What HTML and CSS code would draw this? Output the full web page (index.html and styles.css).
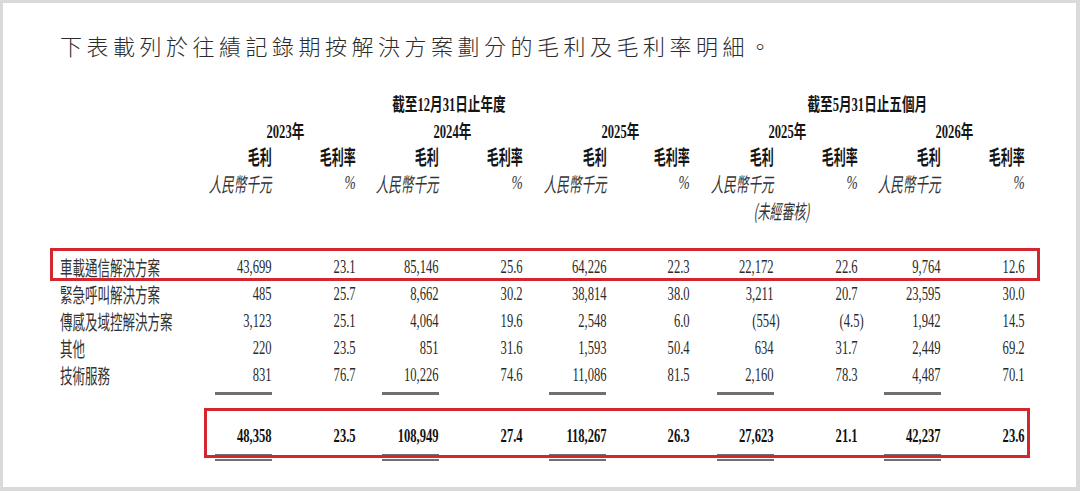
FILE: index.html
```html
<!DOCTYPE html>
<html lang="zh-Hant">
<head>
<meta charset="utf-8">
<title>毛利及毛利率明細</title>
<link rel="stylesheet" href="styles.css">
</head>
<body>
<div class="frame">
  <p class="title">下表載列於往績記錄期按解決方案劃分的毛利及毛利率明細。</p>

  <div class="grid head">
    <div class="c"></div>
    <div class="c grp g1">截至12月31日止年度</div>
    <div class="c grp g2">截至5月31日止五個月</div>

    <div class="c"></div>
    <div class="c yr">2023年</div>
    <div class="c yr">2024年</div>
    <div class="c yr">2025年</div>
    <div class="c yr">2025年</div>
    <div class="c yr">2026年</div>

    <div class="c"></div>
    <div class="c hd">毛利</div><div class="c hd">毛利率</div>
    <div class="c hd">毛利</div><div class="c hd">毛利率</div>
    <div class="c hd">毛利</div><div class="c hd">毛利率</div>
    <div class="c hd">毛利</div><div class="c hd">毛利率</div>
    <div class="c hd">毛利</div><div class="c hd">毛利率</div>

    <div class="c"></div>
    <div class="c unit">人民幣千元</div><div class="c pct">%</div>
    <div class="c unit">人民幣千元</div><div class="c pct">%</div>
    <div class="c unit">人民幣千元</div><div class="c pct">%</div>
    <div class="c unit">人民幣千元</div><div class="c pct">%</div>
    <div class="c unit">人民幣千元</div><div class="c pct">%</div>

    <div class="c unit unaud">(未經審核)</div>
  </div>

  <div class="grid body">
    <div class="c lbl">車載通信解決方案</div>
    <div class="c n">43,699</div><div class="c n">23.1</div>
    <div class="c n">85,146</div><div class="c n">25.6</div>
    <div class="c n">64,226</div><div class="c n">22.3</div>
    <div class="c n">22,172</div><div class="c n">22.6</div>
    <div class="c n">9,764</div><div class="c n">12.6</div>

    <div class="c lbl">緊急呼叫解決方案</div>
    <div class="c n">485</div><div class="c n">25.7</div>
    <div class="c n">8,662</div><div class="c n">30.2</div>
    <div class="c n">38,814</div><div class="c n">38.0</div>
    <div class="c n">3,211</div><div class="c n">20.7</div>
    <div class="c n">23,595</div><div class="c n">30.0</div>

    <div class="c lbl">傳感及域控解決方案</div>
    <div class="c n">3,123</div><div class="c n">25.1</div>
    <div class="c n">4,064</div><div class="c n">19.6</div>
    <div class="c n">2,548</div><div class="c n">6.0</div>
    <div class="c n neg">(554)</div><div class="c n neg">(4.5)</div>
    <div class="c n">1,942</div><div class="c n">14.5</div>

    <div class="c lbl">其他</div>
    <div class="c n">220</div><div class="c n">23.5</div>
    <div class="c n">851</div><div class="c n">31.6</div>
    <div class="c n">1,593</div><div class="c n">50.4</div>
    <div class="c n">634</div><div class="c n">31.7</div>
    <div class="c n">2,449</div><div class="c n">69.2</div>

    <div class="c lbl">技術服務</div>
    <div class="c n">831</div><div class="c n">76.7</div>
    <div class="c n">10,226</div><div class="c n">74.6</div>
    <div class="c n">11,086</div><div class="c n">81.5</div>
    <div class="c n">2,160</div><div class="c n">78.3</div>
    <div class="c n">4,487</div><div class="c n">70.1</div>

    <div class="sp"></div>
    <div class="rule"></div><div class="sp"></div>
    <div class="rule"></div><div class="sp"></div>
    <div class="rule"></div><div class="sp"></div>
    <div class="rule"></div><div class="sp"></div>
    <div class="rule"></div><div class="sp"></div>

    <div class="c tot"></div>
    <div class="c n tot">48,358</div><div class="c n tot">23.5</div>
    <div class="c n tot">108,949</div><div class="c n tot">27.4</div>
    <div class="c n tot">118,267</div><div class="c n tot">26.3</div>
    <div class="c n tot">27,623</div><div class="c n tot">21.1</div>
    <div class="c n tot">42,237</div><div class="c n tot">23.6</div>

    <div class="sp"></div>
    <div class="drule"></div><div class="sp"></div>
    <div class="drule"></div><div class="sp"></div>
    <div class="drule"></div><div class="sp"></div>
    <div class="drule"></div><div class="sp"></div>
    <div class="drule"></div><div class="sp"></div>
  </div>

  <div class="mark mark-row"></div>
  <div class="mark mark-total"></div>
</div>
</body>
</html>
```

FILE: styles.css
```css
html, body {
  margin: 0;
  padding: 0;
  background: #ffffff;
}

.frame {
  position: relative;
  width: 1080px;
  height: 491px;
  box-sizing: border-box;
  border-style: solid;
  border-color: #dadada;
  border-width: 3px 4px 4px 3px;
  padding-left: 57px;
  background: #ffffff;
  color: #2a2a2a;
  font-family: "Liberation Serif", "Noto Sans CJK TC", serif;
}

.title {
  margin: 0;
  padding-top: 27px;
  font-family: "Noto Sans CJK TC", sans-serif;
  font-size: 22px;
  font-weight: 300;
  line-height: 30px;
  letter-spacing: 4.5px;
  color: #2b2b2b;
  white-space: nowrap;
}

.grid {
  display: grid;
  grid-template-columns: 128px repeat(10, 83.67px);
}

.head {
  margin-top: 29px;
}

.body {
  margin-top: 30px;
}

.c {
  height: 27px;
  display: flex;
  align-items: center;
  justify-content: flex-end;
  white-space: nowrap;
  transform-origin: right center;
}

/* header */
.grp {
  justify-content: center;
  transform-origin: center center;
  transform: scaleX(0.7);
  margin-left: 20px;
  font-size: 18px;
  font-weight: 700;
  color: #151515;
}
.g1 { grid-column: span 6; }
.g2 { grid-column: span 4; }

.yr {
  grid-column: span 2;
  margin-right: 51px;
  transform: scaleX(0.7);
  font-size: 18px;
  font-weight: 700;
  color: #151515;
}

.hd {
  font-family: "Noto Sans CJK TC", sans-serif;
  font-size: 20px;
  font-weight: 700;
  color: #151515;
  transform: scaleX(0.6);
}

.unit {
  font-family: "Noto Sans CJK TC", sans-serif;
  font-size: 20px;
  font-style: italic;
  font-weight: 400;
  color: #333333;
  transform: scaleX(0.63);
}

.pct {
  font-size: 18px;
  font-style: italic;
  color: #333333;
  transform: scaleX(0.75);
}

.unaud {
  grid-column: 8;
  grid-row: 5;
  margin-right: -36px;
  transform: scaleX(0.6);
}

/* body */
.lbl {
  justify-content: flex-start;
  transform-origin: left center;
  transform: scaleX(0.625);
  font-family: "Noto Sans CJK TC", sans-serif;
  font-size: 20px;
  font-weight: 400;
  color: #333333;
}

.n {
  font-size: 18px;
  color: #2a2a2a;
  transform: scaleX(0.7);
}

.neg {
  margin-right: -6px;
}

.sp {
  height: 0;
}

.rule {
  justify-self: end;
  width: 57px;
  height: 3px;
  margin-top: 3px;
  background: #6f6f6f;
}

.tot {
  margin-top: 28px;
  font-weight: 700;
  color: #111111;
}

.drule {
  justify-self: end;
  width: 57px;
  height: 7px;
  margin-top: 4px;
  box-sizing: border-box;
  border-top: 2px solid #6f6f6f;
  border-bottom: 2px solid #6f6f6f;
}

/* red annotation boxes drawn over the table */
.mark {
  position: absolute;
  box-sizing: border-box;
  border: 3px solid #d3262f;
  pointer-events: none;
}
.mark-row {
  left: 47px;
  top: 245px;
  width: 990px;
  height: 33px;
}
.mark-total {
  left: 201px;
  top: 405px;
  width: 826px;
  height: 50px;
}
```
